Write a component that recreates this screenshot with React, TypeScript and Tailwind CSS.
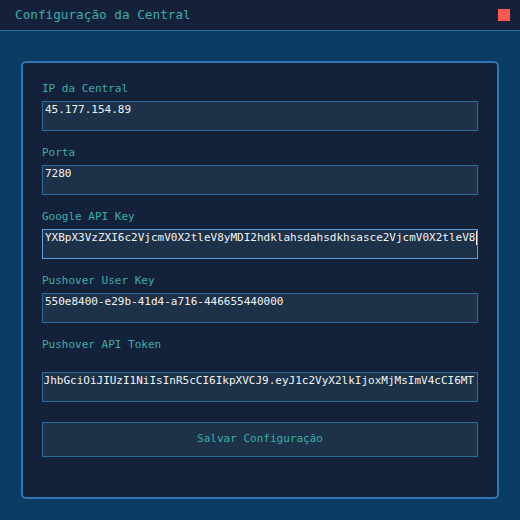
import React from "react";

const mono = { fontFamily: '"DejaVu Sans Mono", "Liberation Mono", monospace' };

function Field({
  label,
  value,
  focused = false,
  scrolled = false,
  labelGap = "mb-[4px]",
  last = false,
}: {
  label: string;
  value: string;
  focused?: boolean;
  scrolled?: boolean;
  labelGap?: string;
  last?: boolean;
}) {
  return (
    <div className={last ? "" : "mb-[14px]"}>
      <div className={`h-[16px] text-[11px] leading-[16px] text-[#3aafa7] ${labelGap}`}>{label}</div>
      <div
        className={`h-[30px] overflow-hidden border bg-[#1d3148] pl-[2px] pr-[3px] pt-[1px] flex ${
          focused ? "border-[#5e9fd6]" : "border-[#2c6a9b]"
        } ${scrolled ? "justify-end" : "justify-start"}`}
      >
        <span className="whitespace-nowrap text-[11px] leading-[14px] text-[#f2f4f6] shrink-0 h-[14px] flex">
          {value}
          {focused && <span className="ml-[1px] inline-block w-[1px] h-[14px] bg-[#f2f4f6]" />}
        </span>
      </div>
    </div>
  );
}

export default function App() {
  return (
    <div className="w-[520px] h-[520px] flex flex-col bg-[#0b3c64]" style={mono}>
      <div className="h-[31px] shrink-0 flex items-center justify-between bg-[#15213a] border-b border-[#2a6fa6] pl-[15px] pr-[10px]">
        <span className="text-[12.7px] text-[#3aafa7] leading-[16px]">Configuração da Central</span>
        <span className="w-[12px] h-[12px] bg-[#ff5a52]" />
      </div>
      <div className="flex-1 flex flex-col pt-[30px] px-[21px] pb-[21px]">
        <div className="flex-1 rounded-[5px] border-2 border-[#2a77b3] bg-[#14213a] px-[19px] pt-[18px]">
          <Field label="IP da Central" value="45.177.154.89" />
          <Field label="Porta" value="7280" />
          <Field
            label="Google API Key"
            value="YXBpX3VzZXI6c2VjcmV0X2tleV8yMDI2hdklahsdahsdkhsasce2VjcmV0X2tleV8"
            focused
          />
          <Field label="Pushover User Key" value="550e8400-e29b-41d4-a716-446655440000" />
          <Field
            label="Pushover API Token"
            value="eyJhbGciOiJIUzI1NiIsInR5cCI6IkpXVCJ9.eyJ1c2VyX2lkIjoxMjMsImV4cCI6MT"
            scrolled
            labelGap="mb-[19px]"
            last
          />
          <button
            className="mt-[20px] w-full h-[35px] border border-[#2c6a9b] bg-[#1d3148] text-[11px] text-[#3aafa7] flex items-center justify-center"
            style={mono}
          >
            Salvar Configuração
          </button>
        </div>
      </div>
    </div>
  );
}
